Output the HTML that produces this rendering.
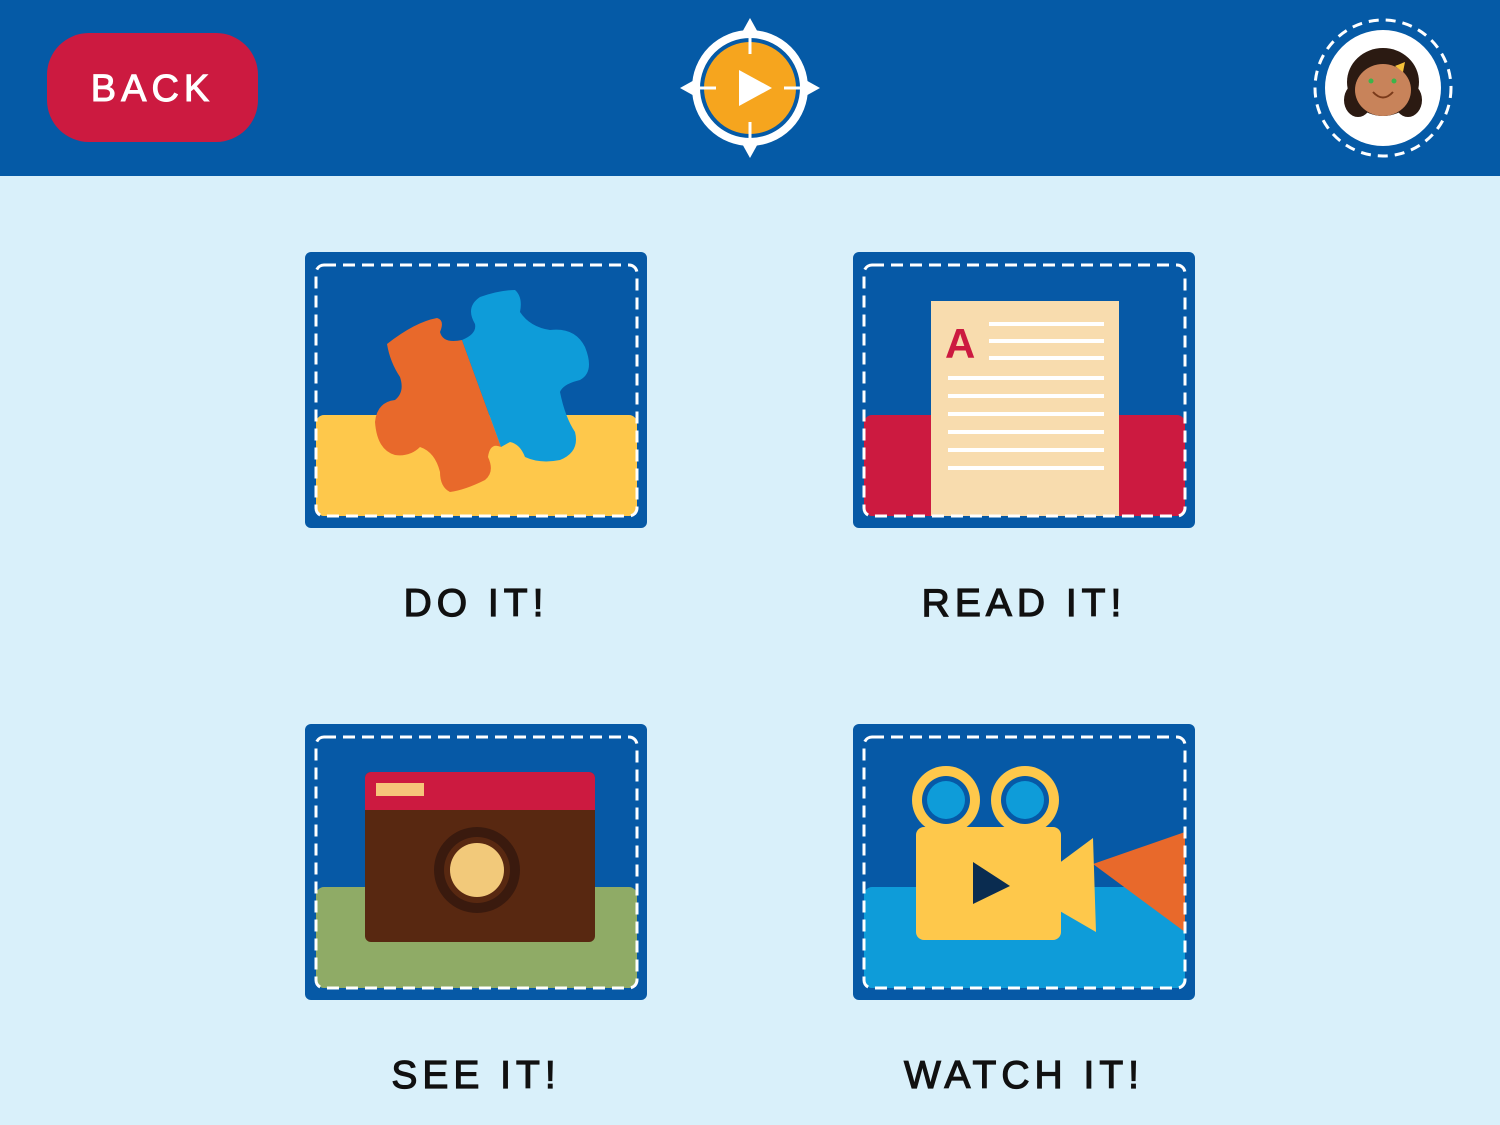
<!DOCTYPE html>
<html><head><meta charset="utf-8"><style>
html,body{margin:0;padding:0}
body{width:1500px;height:1125px;background:#d9f0fa;position:relative;overflow:hidden;font-family:"Liberation Sans",sans-serif}
.hdr{position:absolute;left:0;top:0;width:1500px;height:176px;background:#055aa6}
.back{position:absolute;left:47px;top:33px;width:211px;height:109px;border-radius:42px;background:#cc1a40;color:#fff;font-size:38px;letter-spacing:5px;line-height:112px;text-align:center;-webkit-text-stroke:1px #fff}
.card{position:absolute;width:342px;height:276px}
.lbl{position:absolute;width:342px;text-align:center;font-size:39px;letter-spacing:5px;color:#111;-webkit-text-stroke:1.2px #111}
</style></head><body>
<div class="hdr"></div>
<div class="back">BACK</div>
<svg style="position:absolute;left:670px;top:10px" width="160" height="160" viewBox="670 10 160 160">
<circle cx="750" cy="88" r="54" fill="none" stroke="#fff" stroke-width="8"/>
<circle cx="750" cy="88" r="46" fill="#f6a51e"/>
<polygon points="750,18 740,36 760,36" fill="#fff"/>
<polygon points="750,158 740,140 760,140" fill="#fff"/>
<polygon points="680,88 698,78 698,98" fill="#fff"/>
<polygon points="820,88 802,78 802,98" fill="#fff"/>
<g stroke="#fff" stroke-width="3"><line x1="750" y1="30" x2="750" y2="54"/><line x1="750" y1="122" x2="750" y2="146"/><line x1="692" y1="88" x2="716" y2="88"/><line x1="784" y1="88" x2="808" y2="88"/></g>
<polygon points="739,70 739,106 772,88" fill="#fff"/>
</svg>
<svg style="position:absolute;left:1300px;top:5px" width="170" height="170" viewBox="1300 5 170 170">
<circle cx="1383" cy="88" r="68" fill="none" stroke="#fff" stroke-width="3" stroke-dasharray="10 7"/>
<circle cx="1383" cy="88" r="58" fill="#fff"/>
<ellipse cx="1383" cy="82" rx="36" ry="34" fill="#2b1a12"/>
<ellipse cx="1358" cy="100" rx="14" ry="17" fill="#2b1a12"/>
<ellipse cx="1408" cy="100" rx="14" ry="17" fill="#2b1a12"/>
<ellipse cx="1383" cy="90" rx="28" ry="26" fill="#c8835a"/>
<circle cx="1371" cy="81" r="2.5" fill="#3bb54a"/><circle cx="1394" cy="81" r="2.5" fill="#3bb54a"/>
<path d="M1373,92 Q1383,103 1393,92" fill="none" stroke="#7a3a1a" stroke-width="2"/>
<polygon points="1395,66 1405,62 1403,72" fill="#f6c23a"/>
</svg>

<svg class="card" style="left:305px;top:252px" viewBox="0 0 342 276">
<rect width="342" height="276" rx="6" fill="#0659a6"/>
<rect x="11" y="163" width="321" height="101" rx="8" fill="#fec84b"/>
<path d="M82,92 Q110,70 132,66 Q140,68 135,80 Q138,92 157,88 L196,195 Q185,190 183,205 Q190,220 180,228 Q160,238 145,240 Q135,235 135,220 Q130,200 115,195 Q105,205 90,203 Q72,198 70,170 Q72,150 90,148 Q100,140 95,125 Q85,110 82,92 Z" fill="#e8692b"/>
<path d="M157,88 Q172,82 170,72 Q160,55 175,45 Q195,38 210,38 Q218,45 215,60 Q225,75 245,78 Q270,75 280,95 Q290,120 275,128 Q258,132 255,140 Q260,165 270,180 Q275,200 255,208 Q235,212 220,205 Q215,192 205,190 L196,195 Z" fill="#0e9cd9"/>
<rect x="11" y="13" width="321" height="251" rx="8" fill="none" stroke="#fff" stroke-width="3" stroke-dasharray="12 7"/>
</svg>
<div class="lbl" style="left:305px;top:582px">DO IT!</div>

<svg class="card" style="left:853px;top:252px" viewBox="0 0 342 276">
<rect width="342" height="276" rx="6" fill="#0659a6"/>
<rect x="11" y="163" width="321" height="101" rx="8" fill="#cc1a40"/>
<rect x="78" y="49" width="188" height="215" fill="#f8dcae"/>
<text x="92" y="106" font-family="Liberation Sans,sans-serif" font-size="42" font-weight="bold" fill="#cc1a40">A</text>
<g stroke="#fff" stroke-width="4">
<line x1="136" y1="72" x2="251" y2="72"/><line x1="136" y1="89" x2="251" y2="89"/><line x1="136" y1="106" x2="251" y2="106"/>
<line x1="95" y1="126" x2="251" y2="126"/><line x1="95" y1="144" x2="251" y2="144"/><line x1="95" y1="162" x2="251" y2="162"/>
<line x1="95" y1="180" x2="251" y2="180"/><line x1="95" y1="198" x2="251" y2="198"/><line x1="95" y1="216" x2="251" y2="216"/>
</g>
<rect x="11" y="13" width="321" height="251" rx="8" fill="none" stroke="#fff" stroke-width="3" stroke-dasharray="12 7"/>
</svg>
<div class="lbl" style="left:853px;top:582px">READ IT!</div>

<svg class="card" style="left:305px;top:724px" viewBox="0 0 342 276">
<rect width="342" height="276" rx="6" fill="#0659a6"/>
<rect x="11" y="163" width="321" height="101" rx="8" fill="#8fab66"/>
<rect x="60" y="48" width="230" height="170" rx="6" fill="#582811"/>
<path d="M60,86 V54 a6,6 0 0 1 6,-6 H284 a6,6 0 0 1 6,6 V86 Z" fill="#cc1a40"/>
<rect x="71" y="59" width="48" height="13" fill="#f6c57a"/>
<circle cx="172" cy="146" r="43" fill="#3a1a0e"/>
<circle cx="172" cy="146" r="33" fill="#582811"/>
<circle cx="172" cy="146" r="27" fill="#f2c97a"/>
<rect x="11" y="13" width="321" height="251" rx="8" fill="none" stroke="#fff" stroke-width="3" stroke-dasharray="12 7"/>
</svg>
<div class="lbl" style="left:305px;top:1054px">SEE IT!</div>

<svg class="card" style="left:853px;top:724px" viewBox="0 0 342 276">
<rect width="342" height="276" rx="6" fill="#0659a6"/>
<rect x="11" y="163" width="321" height="101" rx="8" fill="#0e9cd9"/>
<polygon points="240,140 332,108 332,208" fill="#e8692b"/>
<circle cx="93" cy="76" r="34" fill="#fec84b"/><circle cx="93" cy="76" r="24" fill="#0659a6"/><circle cx="93" cy="76" r="19" fill="#0e9cd9"/>
<circle cx="172" cy="76" r="34" fill="#fec84b"/><circle cx="172" cy="76" r="24" fill="#0659a6"/><circle cx="172" cy="76" r="19" fill="#0e9cd9"/>
<rect x="63" y="103" width="145" height="113" rx="8" fill="#fec84b"/>
<polygon points="205,140 240,114 243,208 205,186" fill="#fec84b"/>
<polygon points="120,138 120,180 157,162" fill="#0a2c50"/>
<rect x="11" y="13" width="321" height="251" rx="8" fill="none" stroke="#fff" stroke-width="3" stroke-dasharray="12 7"/>
</svg>
<div class="lbl" style="left:853px;top:1054px">WATCH IT!</div>
</body></html>
